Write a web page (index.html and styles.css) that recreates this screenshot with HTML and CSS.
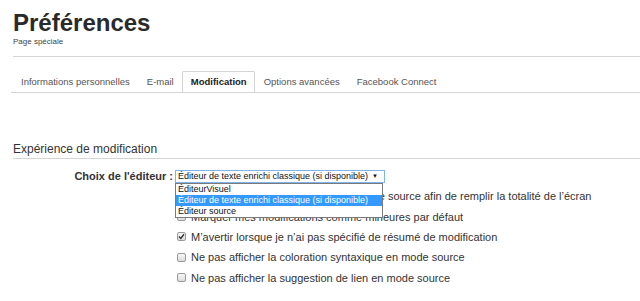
FILE: index.html
```html
<!DOCTYPE html>
<html lang="fr">

<head>
    <meta charset="UTF-8" />
    <meta name="viewport" content="width=device-width, initial-scale=1.0" />
    <title>Préférences</title>
    <link rel="stylesheet" href="styles.css">
</head>

<body>
    <div class="page">
        <div class="page-header">
            <h1>Préférences</h1>
            <div class="subtitle">Page spéciale</div>
        </div>

        <ul class="tabs">
            <li class="tab">Informations personnelles</li>
            <li class="tab">E-mail</li>
            <li class="tab active">Modification</li>
            <li class="tab">Options avancées</li>
            <li class="tab">Facebook Connect</li>
        </ul>

        <h2 class="section-title">Expérience de modification</h2>

        <div class="field">
            <div class="field-label">Choix de l'éditeur :</div>
            <div class="field-input">
                <div class="select">
                    <span>Éditeur de texte enrichi classique (si disponible)</span>
                    <span class="arrow">▼</span>
                    <ul class="dropdown">
                        <li>ÉditeurVisuel</li>
                        <li class="selected">Éditeur de texte enrichi classique (si disponible)</li>
                        <li>Éditeur source</li>
                    </ul>
                </div>

                <div class="options">
                    <label class="check-row"><span class="cb"></span>Élargir la boîte de modification en mode source afin de remplir la totalité de l’écran</label>
                    <label class="check-row"><span class="cb"></span>Marquer mes modifications comme mineures par défaut</label>
                    <label class="check-row">
                        <span class="cb">
                            <svg width="7" height="7" viewBox="0 0 7 7"><path d="M1 3.6 L2.8 5.4 L6 1.3" fill="none" stroke="#333" stroke-width="1.4" /></svg>
                        </span>M’avertir lorsque je n’ai pas spécifié de résumé de modification
                    </label>
                    <label class="check-row"><span class="cb"></span>Ne pas afficher la coloration syntaxique en mode source</label>
                    <label class="check-row"><span class="cb"></span>Ne pas afficher la suggestion de lien en mode source</label>
                </div>
            </div>
        </div>
    </div>
</body>

</html>
```

FILE: styles.css
```css
body {
    margin: 0;
    font-family: 'Liberation Sans', Arial, sans-serif;
    background-color: #fff;
    color: #333;
}

.page {
    padding-left: 13px;
}

.page-header {
    padding-top: 9px;
    padding-bottom: 9px;
    border-bottom: 1px solid #d4d4d4;
}

h1 {
    margin: 0;
    font-size: 24px;
    line-height: 28px;
    font-weight: bold;
    color: #2a2a2a;
}

.subtitle {
    font-size: 8px;
    line-height: 10px;
    color: #444;
}

.tabs {
    list-style: none;
    display: flex;
    margin: 14px 0 0 -2px;
    padding: 0 0 0 1.5px;
    border-bottom: 1px solid #d4d4d4;
}

.tab {
    padding: 0 7.5px;
    border: 1px solid transparent;
    border-bottom: none;
    font-size: 9.5px;
    line-height: 20px;
    color: #555;
}

.tab.active {
    border-color: #d4d4d4;
    border-radius: 2px 2px 0 0;
    font-weight: bold;
    color: #222;
}

.section-title {
    margin: 49px 0 0;
    padding-bottom: 2px;
    font-size: 12px;
    line-height: 14px;
    font-weight: normal;
    color: #333;
    border-bottom: 1px solid #d4d4d4;
}

.field {
    display: grid;
    grid-template-columns: 160px auto;
    column-gap: 2px;
    margin-top: 11px;
}

.field-label {
    text-align: right;
    font-size: 11px;
    font-weight: bold;
    line-height: 13px;
    color: #333;
}

.select {
    position: relative;
    width: 206px;
    height: 11px;
    border: 1px solid #7eb4ea;
    font-size: 9px;
    line-height: 11px;
    color: #111;
    padding-left: 2px;
    box-sizing: content-box;
    display: flex;
    justify-content: space-between;
}

.select .arrow {
    font-size: 6px;
    margin-right: 6px;
}

.dropdown {
    position: absolute;
    top: 12px;
    left: -1px;
    width: 206px;
    margin: 0;
    padding: 0;
    list-style: none;
    background: #fff;
    border: 1px solid #7a7a7a;
    z-index: 2;
}

.dropdown li {
    padding-left: 2px;
    line-height: 11px;
    font-size: 9px;
    color: #111;
}

.dropdown li.selected {
    background-color: #3399ff;
    color: #fff;
}

.options {
    margin-top: 3px;
}

.check-row {
    display: flex;
    align-items: center;
    height: 20.4px;
    font-size: 11px;
    color: #333;
    white-space: nowrap;
}

.cb {
    display: flex;
    align-items: center;
    justify-content: center;
    width: 7px;
    height: 7px;
    margin: 0 5px 0 2px;
    border: 1px solid #9a9a9a;
    border-radius: 2px;
    background: linear-gradient(#f6f6f6, #dcdcdc);
}
```
